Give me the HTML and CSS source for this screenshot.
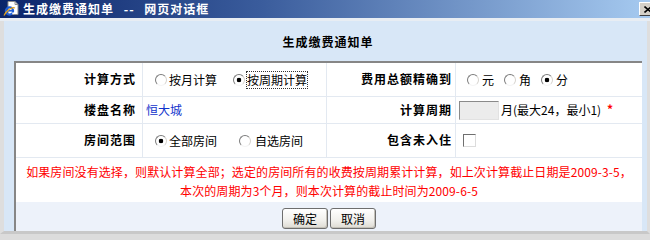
FILE: index.html
```html
<!DOCTYPE html>
<html lang="zh-CN">
<head>
<meta charset="utf-8">
<title>生成缴费通知单</title>
<link rel="stylesheet" href="styles.css">
</head>
<body>
<div class="window">
  <div class="titlebar">
    <svg class="ie-icon" width="16" height="16" viewBox="0 0 16 16">
      <path d="M5 0.5h7l3 3v10h-10z" fill="#fff" stroke="#8c8c8c"/>
      <path d="M12 0.5v3h3" fill="none" stroke="#8c8c8c"/>
      <circle cx="6.5" cy="10" r="3.6" fill="none" stroke="#1f5fd8" stroke-width="2.2"/>
      <path d="M3.5 9.8h6.2" stroke="#1f5fd8" stroke-width="1.6"/>
      <path d="M9.6 11.5l1 1.5" stroke="#fff" stroke-width="1.6"/>
      <path d="M1 14.5c2.5-5 8-9 11-7.5" fill="none" stroke="#e4a21a" stroke-width="1.2"/>
    </svg>
    <span class="title-text">生成缴费通知单 -- 网页对话框</span>
    <span class="close-btn">
      <svg width="8" height="7" viewBox="0 0 8 7"><path d="M0.5 0.5l7 6M7.5 0.5l-7 6" stroke="#000" stroke-width="1.6"/></svg>
    </span>
  </div>
  <div class="title-sep"></div>
  <div class="frame">
    <div class="client">
      <div class="heading">生成缴费通知单</div>
      <div class="panel">
        <div class="grid">
          <div class="cell label">计算方式</div>
          <div class="cell field field-radios">
            <label class="opt"><input type="radio" name="mode">按月计算</label>
            <label class="opt opt-next"><input type="radio" name="mode" checked><span class="focused">按周期计算</span></label>
          </div>
          <div class="cell label label-right">费用总额精确到</div>
          <div class="cell field field-precision">
            <label class="opt"><input type="radio" name="prec">元</label>
            <label class="opt opt-small"><input type="radio" name="prec">角</label>
            <label class="opt opt-small"><input type="radio" name="prec" checked>分</label>
          </div>

          <div class="cell label">楼盘名称</div>
          <div class="cell field field-text"><span class="estate">恒大城</span></div>
          <div class="cell label label-right">计算周期</div>
          <div class="cell field field-period">
            <input class="period-input" type="text" value="">
            <span class="period-hint">月(最大24，最小1)</span>
            <span class="required">*</span>
          </div>

          <div class="cell label">房间范围</div>
          <div class="cell field field-radios">
            <label class="opt"><input type="radio" name="scope" checked>全部房间</label>
            <label class="opt opt-wide"><input type="radio" name="scope">自选房间</label>
          </div>
          <div class="cell label label-right">包含未入住</div>
          <div class="cell field field-check">
            <input type="checkbox" class="check">
          </div>
        </div>
        <div class="note">如果房间没有选择，则默认计算全部；选定的房间所有的收费按周期累计计算，如上次计算截止日期是2009-3-5，<br>本次的周期为3个月，则本次计算的截止时间为2009-6-5</div>
        <div class="footer">
          <button class="btn" type="button">确定</button>
          <button class="btn" type="button">取消</button>
        </div>
      </div>
    </div>
  </div>
</div>
</body>
</html>
```

FILE: styles.css
```css
* {
  box-sizing: border-box;
}

html,
body {
  margin: 0;
  padding: 0;
}

body {
  width: 650px;
  height: 234px;
  overflow: hidden;
  background: #dcdcdc;
  font-family: "Noto Sans CJK SC", "Noto Sans", sans-serif;
  font-size: 12px;
  line-height: 1.2;
  color: #000;
}

.window {
  width: 650px;
  height: 234px;
  display: flex;
  flex-direction: column;
}

.titlebar {
  height: 18px;
  flex: none;
  display: flex;
  align-items: center;
  padding-left: 3px;
  background: linear-gradient(to right, #0a246a 0%, #3a5c9c 40%, #a6caf0 100%);
  color: #fff;
  overflow: hidden;
}

.ie-icon {
  flex: none;
  display: block;
}

.title-text {
  margin-left: 4px;
  font-weight: bold;
  letter-spacing: 1px;
  word-spacing: 6px;
  white-space: pre;
  line-height: 18px;
}

.close-btn {
  margin-left: auto;
  margin-right: -6px;
  width: 17px;
  height: 14px;
  flex: none;
  display: flex;
  align-items: center;
  justify-content: center;
  background: #d4d0c8;
  border: 1px solid;
  border-color: #fff #404040 #404040 #fff;
}

.title-sep {
  height: 3px;
  flex: none;
  background: #e8edf3;
}

.frame {
  flex: 1;
  display: flex;
  border-left: 4px solid #dedede;
  border-right: 3px solid #dedede;
  border-bottom: 3px solid #c8c8c8;
}

.client {
  flex: 1;
  display: flex;
  flex-direction: column;
  background: #d8e7f7;
  padding: 0 5px 0 10px;
}

.heading {
  height: 40px;
  flex: none;
  padding-top: 12px;
  line-height: 18px;
  text-align: center;
  font-weight: bold;
  letter-spacing: 1px;
}

.panel {
  flex: 1;
  display: flex;
  flex-direction: column;
  background: #fff;
  border-top: 2px solid #868686;
  border-left: 2px solid #868686;
}

.grid {
  display: grid;
  grid-template-columns: 127px 184px 129px 186px;
  grid-template-rows: 34px 27px 34px;
}

.cell {
  display: flex;
  align-items: center;
  border-right: 1px solid #e3e9f1;
  border-bottom: 1px solid #e3e9f1;
  white-space: nowrap;
}

.cell:nth-child(4n) {
  border-right: none;
}

.label {
  justify-content: flex-end;
  padding-right: 6px;
  font-weight: bold;
  letter-spacing: 1px;
}

.label-right {
  padding-right: 3px;
}

.opt {
  display: flex;
  align-items: center;
  line-height: 16px;
}

.opt input[type="radio"] {
  -webkit-appearance: none;
  appearance: none;
  width: 12px;
  height: 12px;
  margin: 0 2px 0 0;
  border-radius: 50%;
  border: 1px solid;
  border-color: #7c7c7c #d6d3ce #f4f4f4 #7c7c7c;
  background: #fff;
  flex: none;
}

.opt input[type="radio"]:checked {
  background: radial-gradient(circle, #000 0 2px, #fff 2.6px);
}

.field-radios {
  padding-left: 12px;
}

.opt-next {
  margin-left: 16px;
}

.opt-wide {
  margin-left: 22px;
}

.opt-wide input[type="radio"] {
  margin-right: 4px;
}

.focused {
  outline: 1px dotted #333;
  outline-offset: 0;
}

.field-precision {
  padding-left: 11px;
}

.field-precision .opt input[type="radio"] {
  margin-right: 3px;
}

.opt-small {
  margin-left: 10px;
}

.field-text {
  padding-left: 3px;
}

.estate {
  color: #1133cc;
}

.field-period {
  padding-left: 3px;
}

.period-input {
  width: 40px;
  height: 19px;
  margin: 0;
  padding: 0 2px;
  border: 1px solid;
  border-color: #8a8a8a #e2e2e2 #e2e2e2 #8a8a8a;
  background: #ececec;
  font: inherit;
}

.period-hint {
  margin-left: 2px;
}

.required {
  margin-left: 6px;
  color: #ff0000;
  font-weight: bold;
  position: relative;
  top: -1px;
}

.field-check {
  padding-left: 7px;
}

.check {
  -webkit-appearance: none;
  appearance: none;
  width: 13px;
  height: 13px;
  margin: 0;
  border: 1px solid;
  border-color: #6f6f6f #dcdcdc #dcdcdc #6f6f6f;
  background: #fff;
}

.note {
  height: 44px;
  flex: none;
  padding-top: 4px;
  line-height: 19px;
  text-align: center;
  color: #ff0000;
  white-space: nowrap;
  letter-spacing: 0.1px;
}

.footer {
  flex: 1;
  display: flex;
  justify-content: center;
  align-items: flex-start;
  gap: 2px;
  padding-top: 6px;
  background: #edf2fa;
}

.btn {
  width: 46px;
  height: 21px;
  margin: 0;
  padding: 0;
  font: inherit;
  line-height: 17px;
  color: #000;
  border: 1px solid #6e6e6e;
  border-radius: 3px;
  background: linear-gradient(#ffffff, #f1f0ec 60%, #dedbd3);
  box-shadow: inset -1px -1px 0 #c4c1b8;
}
```
